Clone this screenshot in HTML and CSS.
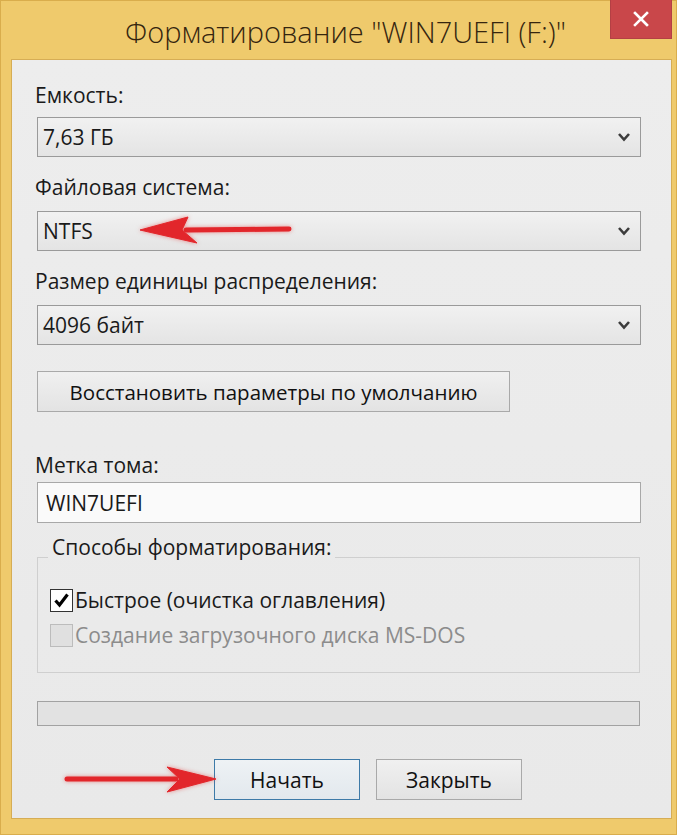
FILE: index.html
```html
<!DOCTYPE html>
<html lang="ru">
<head>
  <meta charset="UTF-8">
  <title>Форматирование</title>
  <link rel="stylesheet" href="styles.css">
</head>
<body>
  <div class="window">
    <div class="titlebar">
      <div class="title">Форматирование "WIN7UEFI (F:)"</div>
      <div class="close">
        <svg width="20" height="20" viewBox="0 0 20 20"><path d="M4 4 L16 16 M16 4 L4 16" stroke="#fff" stroke-width="2.6" stroke-linecap="square"/></svg>
      </div>
    </div>

    <div class="panel">
      <div class="label">Емкость:</div>
      <div class="select"><span>7,63 ГБ</span>
        <svg class="chev" width="14" height="10" viewBox="0 0 14 10"><path d="M2 2 L7 7.5 L12 2" fill="none" stroke="#3c3c3c" stroke-width="2.6"/></svg>
      </div>

      <div class="label">Файловая система:</div>
      <div class="select"><span>NTFS</span>
        <svg class="chev" width="14" height="10" viewBox="0 0 14 10"><path d="M2 2 L7 7.5 L12 2" fill="none" stroke="#3c3c3c" stroke-width="2.6"/></svg>
      </div>

      <div class="label">Размер единицы распределения:</div>
      <div class="select"><span>4096 байт</span>
        <svg class="chev" width="14" height="10" viewBox="0 0 14 10"><path d="M2 2 L7 7.5 L12 2" fill="none" stroke="#3c3c3c" stroke-width="2.6"/></svg>
      </div>

      <button class="btn restore">Восстановить параметры по умолчанию</button>

      <div class="label label-vol">Метка тома:</div>
      <div class="textbox">WIN7UEFI</div>

      <fieldset class="group">
        <legend>Способы форматирования:</legend>
        <div class="check">
          <span class="box on">
            <svg width="19" height="19" viewBox="0 0 19 19"><path d="M3.5 9.5 L7.5 14 L15.5 3.5" fill="none" stroke="#000" stroke-width="3.2"/></svg>
          </span>
          Быстрое (очистка оглавления)
        </div>
        <div class="check disabled">
          <span class="box"></span>
          Создание загрузочного диска MS-DOS
        </div>
      </fieldset>

      <div class="progress"></div>

      <div class="actions">
        <button class="btn default">Начать</button>
        <button class="btn">Закрыть</button>
      </div>
    </div>

    <!-- red arrows drawn over the screenshot -->
    <svg class="marks" width="688" height="838" viewBox="0 0 688 838">
      <g fill="#e2262b" stroke="#e2262b">
        <line x1="186" y1="230" x2="289" y2="229" stroke-width="5" stroke-linecap="round"/>
        <polygon points="140,230 188,217 182,230 197,243" stroke-width="1" stroke-linejoin="round"/>
        <line x1="67" y1="779" x2="176" y2="779" stroke-width="5" stroke-linecap="round"/>
        <polygon points="216,779 167,767 180,779 167,792" stroke-width="1" stroke-linejoin="round"/>
      </g>
    </svg>
  </div>
</body>
</html>
```

FILE: styles.css
```css
body {
  margin: 0;
  background: #fff;
  font-family: "Open Sans", "Noto Sans", sans-serif;
}
.window {
  position: relative;
  width: 677px;
  height: 835px;
  box-sizing: border-box;
  background: #efca6c;
  border: 1px solid #d9ad4c;
  padding: 0 4px 15px 10px;
  display: flex;
  flex-direction: column;
}
.titlebar {
  height: 58px;
  display: flex;
  align-items: flex-start;
}
.title {
  flex: 1;
  padding-left: 70px;
  padding-top: 11px;
  text-align: center;
  font-size: 29px;
  font-weight: 300;
  color: #35250f;
}
.close {
  width: 60px;
  height: 38px;
  background: #c9474a;
  border: 1px solid #b44044;
  border-top: none;
  display: flex;
  align-items: center;
  justify-content: center;
  margin-top: -1px;
}
.panel {
  flex: 1;
  background: linear-gradient(#ededed, #e9e9e9);
  border: 1px solid #d6ad55;
  padding: 23px 30px 0 25px;
  display: flex;
  flex-direction: column;
  font-size: 21px;
  color: #1a1a1a;
}
.label {
  height: 24px;
  line-height: 24px;
  margin-left: -2px;
  margin-bottom: 10px;
}
.select {
  height: 40px;
  box-sizing: border-box;
  border: 1px solid #9a9a9a;
  background: linear-gradient(#f1f1f1, #e4e4e4);
  display: flex;
  align-items: center;
  justify-content: space-between;
  padding: 0 9px 0 5px;
  margin-bottom: 18px;
}
.select + .label {
  margin-bottom: 12px;
}
.btn {
  font-family: inherit;
  font-size: 21px;
  color: #111;
  height: 41px;
  border: 1px solid #a9a9a9;
  background: linear-gradient(#f0f0f0, #e3e3e3);
  padding: 0;
}
.restore {
  width: 473px;
  margin-top: 8px;
  font-size: 20.5px;
}
.label-vol {
  margin-top: 41px;
  margin-bottom: 5px;
}
.textbox {
  height: 41px;
  box-sizing: border-box;
  border: 1px solid #a8a8a8;
  background: #fafafa;
  display: flex;
  align-items: center;
  padding-left: 8px;
}
.group {
  margin: 12px 1px 0 0;
  border: 1px solid #cfcfcf;
  height: 138px;
  box-sizing: border-box;
  padding: 6px 0 0 12px;
}
.group legend {
  padding: 0 4px 20px;
  margin-left: -2px;
  line-height: 24px;
}
.check {
  display: flex;
  align-items: center;
  gap: 2px;
  height: 30px;
  margin-bottom: 5px;
}
.box {
  width: 23px;
  height: 23px;
  box-sizing: border-box;
  border: 1px solid #333;
  background: #fff;
  display: flex;
  align-items: center;
  justify-content: center;
}
.disabled {
  color: #8c8c8c;
}
.disabled .box {
  border-color: #bcbcbc;
  background: #e0e0e0;
}
.progress {
  margin: 28px 1px 0 0;
  height: 25px;
  box-sizing: border-box;
  border: 1px solid #a2a2a2;
  background: #e2e2e2;
}
.actions {
  display: flex;
  gap: 16px;
  margin-top: 33px;
  padding-left: 177px;
}
.actions .btn {
  width: 146px;
}
.default {
  border-color: #3d7aa8;
  background: linear-gradient(#eef2f5, #e2e8ed);
}
.marks {
  position: absolute;
  left: -1px;
  top: -1px;
  pointer-events: none;
  filter: drop-shadow(0 0 2px rgba(230, 40, 40, 0.5));
}
```
